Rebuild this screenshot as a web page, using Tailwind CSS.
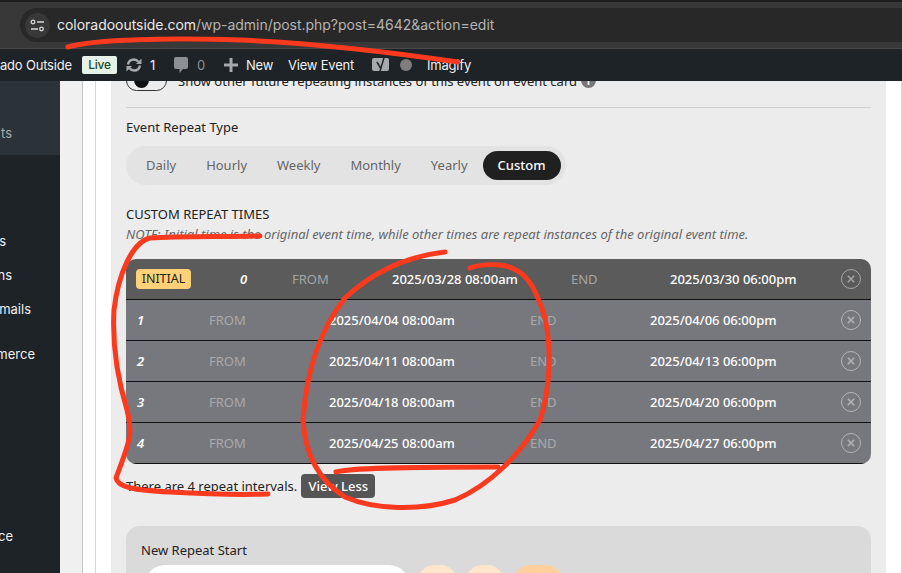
<!DOCTYPE html>
<html lang="en">

<head>
    <meta charset="UTF-8">
    <meta name="viewport" content="width=device-width, initial-scale=1.0">
    <title>Edit Event</title>
    <script src="https://cdn.jsdelivr.net/npm/@tailwindcss/browser@4"></script>
</head>

<body class="bg-white">
    <div class="relative w-[902px] h-[573px] overflow-hidden flex flex-col font-['Noto_Sans',sans-serif] text-[13px] leading-5 text-[#222]">

        <!-- browser toolbar -->
        <header class="relative z-10 shrink-0 h-[49px] bg-[#383838] border-t-2 border-b border-t-[#1e1e1e] border-b-[#4a4a4a] py-[6px] pl-[20px] font-['Inter',sans-serif]">
            <div class="h-[34px] bg-[#282828] rounded-l-full flex items-center pl-[5px]">
                <div class="w-[25px] h-[25px] rounded-full bg-[#383838] flex items-center justify-center">
                    <svg width="15" height="13" viewBox="0 0 15 13" fill="none" stroke="#d8d8d8" stroke-width="1.3">
                        <circle cx="3" cy="3" r="1.8" />
                        <path d="M7 3h7M1 10h7" />
                        <circle cx="11.5" cy="10" r="1.8" />
                    </svg>
                </div>
                <p class="ml-[7px] text-[14px] text-[#b4b4b4] tracking-[-0.03px] whitespace-nowrap"><span class="text-[#e8e8e8]">coloradooutside.com</span>/wp-admin/post.php?post=4642&amp;action=edit</p>
            </div>
        </header>

        <!-- wp admin bar -->
        <nav class="relative z-10 shrink-0 h-[32px] bg-[#1d2327] flex items-center text-[#f0f0f1] text-[13px] tracking-[-0.2px] font-['Inter',sans-serif] whitespace-nowrap">
            <span class="w-[74px]">ado Outside</span>
            <span class="ml-[8px] w-[35px] h-[18px] rounded-[2px] bg-[#e6f2e8] text-[#1c4a24] text-[12px] font-medium flex items-center justify-center">Live</span>
            <svg class="ml-[8px]" width="18" height="16" viewBox="0 0 18 16" fill="none">
                <path d="M3 7.500C3.500 4.500 6 2.500 9 2.500c2 0 3.500 1 4.500 2.200M15 8.500c-.5 3-3 5-6 5-2 0-3.500-1-4.500-2.200" stroke="#a7aaad" stroke-width="2.400" />
                <path d="M16.500 1.500v5.500h-5.500zM1.500 14.500v-5.500h5.500z" fill="#a7aaad" />
            </svg>
            <span class="ml-[7px] w-[10px]">1</span>
            <svg class="ml-[13px]" width="16" height="18" viewBox="0 0 16 18">
                <path d="M3 1h10a2 2 0 0 1 2 2v8a2 2 0 0 1-2 2h-3l-3.500 4v-4H3a2 2 0 0 1-2-2V3a2 2 0 0 1 2-2z" fill="#8c8f94" />
            </svg>
            <span class="ml-[8px] w-[7px] text-[#8c8f94]">0</span>
            <svg class="ml-[20px]" width="14" height="14" viewBox="0 0 14 14">
                <path d="M5.500 0h3v5.500H14v3H8.500V14h-3V8.500H0v-3h5.500z" fill="#a7aaad" />
            </svg>
            <span class="ml-[8px] w-[27px]">New</span>
            <span class="ml-[15px] w-[67px]">View Event</span>
            <svg class="ml-[17px]" width="17" height="20" viewBox="0 0 17 20">
                <path d="M2 3h13a2 2 0 0 1 2 2v9a2 2 0 0 1-2 2H2a2 2 0 0 1-2-2V5a2 2 0 0 1 2-2z" fill="#a7aaad" />
                <path d="M5 7l3.500 6M12.500 1L7.500 18" stroke="#1d2327" stroke-width="1.500" fill="none" />
            </svg>
            <span class="ml-[11px] w-[12px] h-[12px] rounded-full bg-[#7e7e7e]"></span>
            <span class="ml-[15px]">Imagify</span>
        </nav>

        <div class="flex-1 flex min-h-0">
            <!-- admin menu, cut off by the window edge -->
            <aside class="w-[60px] shrink-0 bg-[#1d2327] text-[#f0f0f1] text-[13px] font-['Inter',sans-serif]">
                <div class="h-[74px] bg-[#2c3338] flex items-end justify-end pb-[12px] pr-[48px] text-[#a7aaad]">ts</div>
                <div class="mt-[76px] pr-[54px] flex justify-end">s</div>
                <div class="mt-[14px] pr-[48px] flex justify-end">ns</div>
                <div class="mt-[14px] pr-[29px] flex justify-end">mails</div>
                <div class="mt-[25px] pr-[25px] flex justify-end">merce</div>
                <div class="mt-[162px] pr-[47px] flex justify-end">ce</div>
            </aside>

            <div class="w-[22px] shrink-0 bg-[#f0f0f0] border-r border-[#c3c4c7] box-content"></div>
            <div class="w-[12px] shrink-0 bg-white border-r border-[#d4d4d4] box-content"></div>
            <div class="w-[15px] shrink-0 bg-white"></div>

            <main class="w-[775px] shrink-0 bg-[#ececec] px-[15px]">
                <div class="-mt-[11px] h-[21px] flex items-center">
                    <span class="w-[41px] h-[21px] rounded-full border border-[#333] flex items-center pl-[7px]">
                        <span class="w-[15px] h-[15px] rounded-full bg-[#111]"></span>
                    </span>
                    <span class="ml-[11px]">Show other future repeating instances of this event on event card</span>
                    <span class="ml-[4px] w-[15px] h-[15px] rounded-full bg-[#777] text-white text-[10px] leading-none flex items-center justify-center font-bold">i</span>
                </div>
                <div class="mt-[16px] border-t border-[#d0d0d0]"></div>

                <p class="mt-[9px]">Event Repeat Type</p>
                <div class="mt-[9px] w-fit p-[5px] bg-[#e3e3e3] rounded-full flex text-[#666]">
                    <span class="h-[29px] px-[15px] pb-px flex items-center">Daily</span>
                    <span class="h-[29px] px-[15px] pb-px flex items-center">Hourly</span>
                    <span class="h-[29px] px-[15px] pb-px flex items-center">Weekly</span>
                    <span class="h-[29px] px-[15px] pb-px flex items-center">Monthly</span>
                    <span class="h-[29px] px-[15px] pb-px flex items-center">Yearly</span>
                    <span class="h-[29px] px-[15px] pb-px flex items-center bg-[#202020] text-white rounded-full font-medium">Custom</span>
                </div>

                <p class="mt-[19px]">CUSTOM REPEAT TIMES</p>
                <p class="italic text-[#666]">NOTE: Initial time is the original event time, while other times are repeat instances of the original event time.</p>

                <div class="mt-[15px] rounded-[10px] overflow-hidden text-white font-medium">
                    <div class="h-[41px] bg-[#5b5b5b] border-b border-[#111] pl-[10px] pr-[10px] grid grid-cols-[104px_52px_100px_179px_99px_1fr_20px] items-center">
                        <span class="w-[55px] h-[20px] rounded-[4px] bg-[#ffd27a] text-[#222] text-[12.5px] font-normal flex items-center justify-center">INITIAL</span>
                        <span class="italic font-semibold">0</span>
                        <span class="text-[#a5a5a5] font-normal">FROM</span>
                        <span>2025/03/28 08:00am</span>
                        <span class="text-[#a5a5a5] font-normal">END</span>
                        <span>2025/03/30 06:00pm</span>
                        <svg width="20" height="20" viewBox="0 0 20 20" fill="none" stroke="#a5a5a5"><circle cx="10" cy="10" r="9.500" /><path d="M6.800 6.800l6.400 6.400M13.200 6.800l-6.400 6.400" stroke-width="1.500" /></svg>
                    </div>
                    <div class="h-[41px] bg-[#77787d] border-b border-[#111] pl-[11px] pr-[10px] grid grid-cols-[72px_120px_201px_120px_1fr_20px] items-center">
                        <span class="italic font-semibold">1</span>
                        <span class="text-[#a9a9ab] font-normal">FROM</span>
                        <span>2025/04/04 08:00am</span>
                        <span class="text-[#a9a9ab] font-normal">END</span>
                        <span>2025/04/06 06:00pm</span>
                        <svg width="20" height="20" viewBox="0 0 20 20" fill="none" stroke="#b4b4b6"><circle cx="10" cy="10" r="9.500" /><path d="M6.800 6.800l6.400 6.400M13.200 6.800l-6.400 6.400" stroke-width="1.500" /></svg>
                    </div>
                    <div class="h-[41px] bg-[#77787d] border-b border-[#111] pl-[11px] pr-[10px] grid grid-cols-[72px_120px_201px_120px_1fr_20px] items-center">
                        <span class="italic font-semibold">2</span>
                        <span class="text-[#a9a9ab] font-normal">FROM</span>
                        <span>2025/04/11 08:00am</span>
                        <span class="text-[#a9a9ab] font-normal">END</span>
                        <span>2025/04/13 06:00pm</span>
                        <svg width="20" height="20" viewBox="0 0 20 20" fill="none" stroke="#b4b4b6"><circle cx="10" cy="10" r="9.500" /><path d="M6.800 6.800l6.400 6.400M13.200 6.800l-6.400 6.400" stroke-width="1.500" /></svg>
                    </div>
                    <div class="h-[41px] bg-[#77787d] border-b border-[#111] pl-[11px] pr-[10px] grid grid-cols-[72px_120px_201px_120px_1fr_20px] items-center">
                        <span class="italic font-semibold">3</span>
                        <span class="text-[#a9a9ab] font-normal">FROM</span>
                        <span>2025/04/18 08:00am</span>
                        <span class="text-[#a9a9ab] font-normal">END</span>
                        <span>2025/04/20 06:00pm</span>
                        <svg width="20" height="20" viewBox="0 0 20 20" fill="none" stroke="#b4b4b6"><circle cx="10" cy="10" r="9.500" /><path d="M6.800 6.800l6.400 6.400M13.200 6.800l-6.400 6.400" stroke-width="1.500" /></svg>
                    </div>
                    <div class="h-[41px] bg-[#77787d] border-b border-[#111] pl-[11px] pr-[10px] grid grid-cols-[72px_120px_201px_120px_1fr_20px] items-center">
                        <span class="italic font-semibold">4</span>
                        <span class="text-[#a9a9ab] font-normal">FROM</span>
                        <span>2025/04/25 08:00am</span>
                        <span class="text-[#a9a9ab] font-normal">END</span>
                        <span>2025/04/27 06:00pm</span>
                        <svg width="20" height="20" viewBox="0 0 20 20" fill="none" stroke="#b4b4b6"><circle cx="10" cy="10" r="9.500" /><path d="M6.800 6.800l6.400 6.400M13.200 6.800l-6.400 6.400" stroke-width="1.500" /></svg>
                    </div>
                </div>

                <div class="mt-[10px] h-[24px] flex items-center">
                    <span>There are 4 repeat intervals.</span>
                    <button class="ml-[4px] w-[74px] h-[24px] pb-px bg-[#555] text-white rounded-[4px] font-medium">View Less</button>
                </div>

                <div class="mt-[28px] h-[120px] bg-[#dadada] rounded-t-[14px] pt-[14px] pl-[15px]">
                    <p>New Repeat Start</p>
                    <div class="mt-[5px] flex">
                        <div class="ml-[4px] w-[264px] h-[40px] bg-white rounded-[20px]"></div>
                        <div class="ml-[9px] w-[39px] h-[40px] bg-[#fde6cc] rounded-[16px]"></div>
                        <div class="ml-[9px] w-[38px] h-[40px] bg-[#fde6cc] rounded-[16px]"></div>
                        <div class="ml-[10px] w-[48px] h-[40px] bg-[#ffd09c] rounded-[16px]"></div>
                    </div>
                </div>
            </main>

            <div class="w-[15px] shrink-0 bg-white"></div>
            <div class="w-px shrink-0 bg-[#d4d4d4]"></div>
        </div>

        <!-- red marker scribbles on top of the screenshot -->
        <svg class="absolute inset-0 z-20 pointer-events-none" width="902" height="573" viewBox="0 0 902 573" fill="none" stroke="#f93a1e" stroke-linecap="round" stroke-linejoin="round" stroke-width="5">
            <path d="M68 47C95 39 170 38 240 40C310 43 390 52 458 62" />
            <path d="M260 236C220 237 180 236 150 238C132 242 118 275 114 310C112 345 118 380 127 410C134 435 128 445 116 478C118 488 135 490 170 492C205 494 240 495 268 494" />
            <path d="M445 252C410 256 375 270 345 298C318 332 306 375 303 420C305 455 318 480 345 497C375 510 420 511 455 500C490 485 520 455 540 420C550 390 552 350 545 318C535 285 525 268 500 265C488 264 478 265 470 268" />
            <path d="M336 472C350 468 400 467 498 467" />
        </svg>
    </div>
</body>

</html>
